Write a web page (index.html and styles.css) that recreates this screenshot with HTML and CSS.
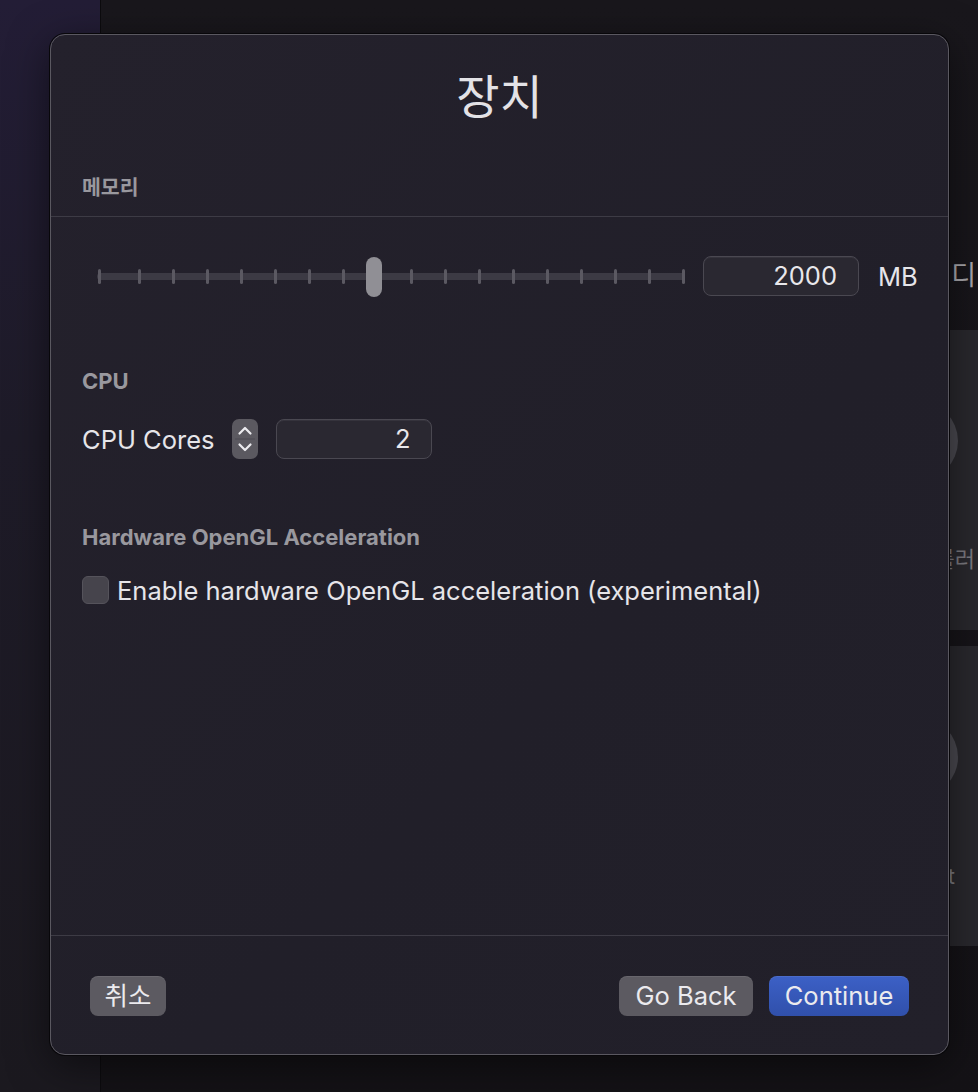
FILE: index.html
```html
<!DOCTYPE html>
<html lang="ko">
<head>
<meta charset="utf-8">
<title>장치</title>
<link rel="stylesheet" href="styles.css">
</head>
<body>
<div class="app">
  <aside class="sidebar"></aside>
  <main class="main">
    <div class="main-head">미디</div>
    <div class="card">
      <div class="card-circle"></div>
      <div class="card-text card-text-1">컨트롤러</div>
    </div>
    <div class="card">
      <div class="card-circle"></div>
      <div class="card-text card-text-2">Default</div>
    </div>
  </main>
</div>

<div class="dialog">
  <div class="dialog-body">
    <h1 class="title">장치</h1>
    <div class="section-label label-memory">메모리</div>
  </div>
  <div class="rule"></div>
  <div class="dialog-body grow">
    <div class="slider-row">
      <div class="track">
        <span class="tick tick-first"></span>
        <span class="tick"></span><span class="tick"></span><span class="tick"></span><span class="tick"></span>
        <span class="tick"></span><span class="tick"></span><span class="tick"></span><span class="tick"></span>
        <span class="tick"></span><span class="tick"></span><span class="tick"></span><span class="tick"></span>
        <span class="tick"></span><span class="tick"></span><span class="tick"></span><span class="tick"></span>
        <span class="tick"></span>
        <span class="knob"></span>
      </div>
      <div class="field">2000</div>
      <span class="unit">MB</span>
    </div>

    <div class="section-label label-cpu">CPU</div>
    <div class="cpu-row">
      <span class="text">CPU Cores</span>
      <span class="stepper">
        <svg width="26" height="40" viewBox="0 0 26 40">
          <line x1="3" y1="20" x2="23" y2="20" stroke="#4c4a52" stroke-width="1"/>
          <path d="M7.5 14.5 L13 9 L18.5 14.5" fill="none" stroke="#ecebef" stroke-width="2.2" stroke-linecap="round" stroke-linejoin="round"/>
          <path d="M7.5 25.5 L13 31 L18.5 25.5" fill="none" stroke="#ecebef" stroke-width="2.2" stroke-linecap="round" stroke-linejoin="round"/>
        </svg>
      </span>
      <div class="field">2</div>
    </div>

    <div class="section-label label-gl">Hardware OpenGL Acceleration</div>
    <label class="check-row">
      <span class="checkbox"></span>
      <span class="text">Enable hardware OpenGL acceleration (experimental)</span>
    </label>
  </div>
  <div class="footer">
    <button class="btn btn-cancel">취소</button>
    <div class="footer-right">
      <button class="btn btn-back">Go Back</button>
      <button class="btn btn-primary">Continue</button>
    </div>
  </div>
</div>
</body>
</html>
```
FILE: styles.css
```css
* { box-sizing: border-box; }
html, body {
  margin: 0;
  width: 978px;
  height: 1092px;
  overflow: hidden;
  background: #18161b;
  font-family: Inter, "Noto Sans CJK KR", sans-serif;
}
.app {
  display: flex;
  width: 978px;
  height: 1092px;
}
.sidebar {
  width: 101px;
  flex: none;
  background: linear-gradient(180deg, #231d36 0%, #1e1b28 40%, #1b191f 100%);
  border-right: 1px solid #0c0b0e;
}
.main {
  flex: 1;
  display: flex;
  flex-direction: column;
  align-items: flex-end;
  padding-top: 258px;
  background: linear-gradient(180deg, #19171c, #141216);
}
.main-head {
  font-size: 27px;
  line-height: 36px;
  color: #a9a8ad;
  padding-right: 2px;
  white-space: nowrap;
  height: 72px;
}
.card {
  width: 337px;
  height: 300px;
  background: #29282d;
  margin-bottom: 16px;
  display: flex;
  flex-direction: column;
  align-items: center;
  padding-top: 71px;
  padding-left: 216px;
  flex: none;
}
.card-circle {
  width: 80px;
  height: 80px;
  border-radius: 50%;
  background: #4a4950;
}
.card-text {
  font-size: 22px;
  line-height: 28px;
  color: #7b7a80;
  white-space: nowrap;
}
.card-text-1 {
  margin-top: 64px;
  align-self: flex-end;
  padding-right: 3px;
}
.card-text-2 { margin-top: 65px; }

.dialog {
  position: absolute;
  left: 50px;
  top: 34px;
  width: 899px;
  height: 1021px;
  border: 1px solid #5a5860;
  border-radius: 15px;
  background: linear-gradient(135deg, #24212c 0%, #211f29 60%, #22202a 100%);
  box-shadow: 0 0 0 1px #08070a, 0 10px 40px rgba(0,0,0,0.5);
  display: flex;
  flex-direction: column;
  color: #e6e5e9;
}
.dialog-body {
  padding: 0 31px;
}
.grow { flex: 1; }
.title {
  margin: 35px 0 0;
  text-align: center;
  font-size: 47px;
  line-height: 54px;
  font-weight: 400;
  color: #e3e2e6;
}
.section-label {
  font-size: 22px;
  line-height: 24px;
  font-weight: 700;
  color: #99989e;
}
.label-memory { margin-top: 52px; margin-bottom: 16px; font-size: 20.5px; }
.rule {
  height: 1px;
  background: #3d3b45;
}
.slider-row {
  display: flex;
  align-items: center;
  height: 40px;
  margin-top: 39px;
}
.track {
  position: relative;
  margin-left: 15px;
  width: 588px;
  height: 7px;
  border-radius: 4px;
  background: #3c3a44;
  display: flex;
  align-items: center;
  padding-left: 1px;
  gap: 31px;
}
.tick {
  width: 3px;
  height: 15px;
  border-radius: 1.5px;
  background: #5b5962;
  flex: none;
}
.tick-first { margin-right: 6px; }
.knob {
  position: absolute;
  left: 269px;
  top: -16px;
  width: 16px;
  height: 40px;
  border-radius: 8px;
  background: #908f95;
}
.field {
  width: 156px;
  height: 40px;
  border-radius: 8px;
  background: #2a2831;
  border: 1px solid #4a4851;
  box-shadow: inset 0 1px 0 #35333c;
  text-align: right;
  padding-right: 21px;
  font-size: 25.5px;
  line-height: 38px;
  color: #e8e7eb;
  flex: none;
}
.slider-row .field { margin-left: 18px; }
.unit {
  margin-left: 19px;
  font-size: 25.5px;
  color: #e6e5e9;
}
.label-cpu { margin-top: 73px; }
.cpu-row {
  display: flex;
  align-items: center;
  height: 40px;
  margin-top: 26px;
}
.text {
  font-size: 25.5px;
  color: #e6e5e9;
  white-space: nowrap;
}
.stepper {
  margin-left: 18px;
  width: 26px;
  height: 40px;
  border-radius: 7px;
  background: #5b5960;
  display: block;
  flex: none;
}
.stepper svg { display: block; }
.cpu-row .field { margin-left: 18px; }
.label-gl { margin-top: 66px; }
.check-row {
  display: flex;
  align-items: center;
  gap: 8px;
  margin-top: 27px;
  height: 28px;
}
.checkbox {
  width: 27px;
  height: 28px;
  border-radius: 6px;
  background: #46444c;
  border: 1px solid #55535b;
  flex: none;
}
.footer {
  border-top: 1px solid #3d3b45;
  padding: 40px 39px 38px;
  display: flex;
  justify-content: space-between;
  align-items: center;
}
.footer-right {
  display: flex;
  gap: 16px;
}
.btn {
  height: 40px;
  border: none;
  border-radius: 8px;
  background: #5c5a61;
  color: #ebeaee;
  font-family: Inter, "Noto Sans CJK KR", sans-serif;
  font-size: 25.5px;
  padding: 0;
  line-height: 40px;
  box-shadow: inset 0 1px 0 rgba(255,255,255,0.08);
}
.btn-cancel { width: 76px; }
.btn-back { width: 134px; }
.btn-primary {
  width: 140px;
  background: linear-gradient(180deg, #3c60c6 0%, #3050ab 100%);
}
```
